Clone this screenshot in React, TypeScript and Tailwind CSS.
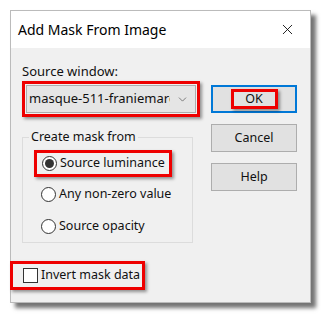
import { ChevronDown, X } from 'lucide-react';

function Radio({ checked, label }: { checked?: boolean; label: string }) {
  return (
    <div className="flex items-center gap-[3px] whitespace-nowrap">
      <span className="w-[15px] h-[15px] rounded-full border border-[#333] bg-white flex items-center justify-center flex-shrink-0">
        {checked && <span className="w-[9px] h-[9px] rounded-full bg-[#333]" />}
      </span>
      <span>{label}</span>
    </div>
  );
}

export default function App() {
  return (
    <div
      className="w-[321px] h-[316px] bg-white pt-[10px] pl-[10px] text-[12.5px] text-[#111]"
      style={{ fontFamily: '"Noto Sans", "Open Sans", sans-serif' }}
    >
      <div className="w-[301px] h-[293px] flex flex-col bg-[#f0f0f0] border border-[#bbb] shadow-[5px_5px_4px_rgba(0,0,0,0.55)]">
        {/* Title bar */}
        <div className="h-[37px] bg-white flex items-center justify-between pl-[7px] pr-[14px] flex-shrink-0">
          <span className="text-[14px] text-black">Add Mask From Image</span>
          <X size={17} strokeWidth={1.2} className="text-black" />
        </div>

        {/* Body */}
        <div className="flex-1 flex pl-[11px] pt-[14px]">
          {/* Left column */}
          <div className="w-[189px] flex flex-col">
            <span className="leading-[18px] text-[13px]">Source window:</span>
            <div className="mt-[1px] w-[178px] h-[36px] border-[3px] border-[#e00] shadow-[2px_2px_3px_rgba(0,0,0,0.4)] flex items-center p-[1px]">
              <div className="w-full h-full border border-[#adadad] bg-[#e5e5e5] flex items-center pl-[2px] pr-[6px] text-[13px]">
                <span className="flex-1 overflow-hidden whitespace-nowrap">masque-511-franiemarge</span>
                <ChevronDown size={13} strokeWidth={1.2} className="ml-[6px] text-[#444]" />
              </div>
            </div>

            {/* Group box */}
            <div className="relative mt-[20px] w-[171px] h-[106px] border border-[#dcdcdc]">
              <span className="absolute -top-[10px] left-[6px] bg-[#f0f0f0] px-[2px] leading-[18px] whitespace-nowrap">Create mask from</span>
              <div className="flex flex-col pl-[11px] pt-[12px]">
                <div className="w-[138px] h-[27px] border-[3px] border-[#e00] shadow-[2px_2px_3px_rgba(0,0,0,0.4)] flex items-center pl-[5px]">
                  <Radio checked label="Source luminance" />
                </div>
                <div className="h-[30px] flex items-center pl-[7px] mt-[2px]">
                  <Radio label="Any non-zero value" />
                </div>
                <div className="h-[30px] flex items-center pl-[7px] mt-[2px]">
                  <Radio label="Source opacity" />
                </div>
              </div>
            </div>

            {/* Invert checkbox */}
            <div className="-ml-[12px] mt-[18px] w-[135px] h-[29px] border-[3px] border-[#e00] shadow-[2px_2px_3px_rgba(0,0,0,0.4)] flex items-center pl-[10px] gap-[3px] whitespace-nowrap">
              <span className="w-[15px] h-[15px] border border-[#333] bg-white flex-shrink-0" />
              <span>Invert mask data</span>
            </div>
          </div>

          {/* Right column: buttons */}
          <div className="flex flex-col gap-[11px] pt-[23px]">
            <div className="w-[86px] h-[28px] border-[2px] border-[#0078d7] bg-[#e1e1e1] flex items-center justify-center">
              <span className="w-[47px] h-[20px] border-[3px] border-[#e00] shadow-[2px_2px_3px_rgba(0,0,0,0.4)] flex items-center justify-center leading-none">
                OK
              </span>
            </div>
            <div className="w-[86px] h-[28px] border border-[#adadad] bg-[#e1e1e1] flex items-center justify-center">
              Cancel
            </div>
            <div className="w-[86px] h-[28px] border border-[#adadad] bg-[#e1e1e1] flex items-center justify-center">
              Help
            </div>
          </div>
        </div>
      </div>
    </div>
  );
}
